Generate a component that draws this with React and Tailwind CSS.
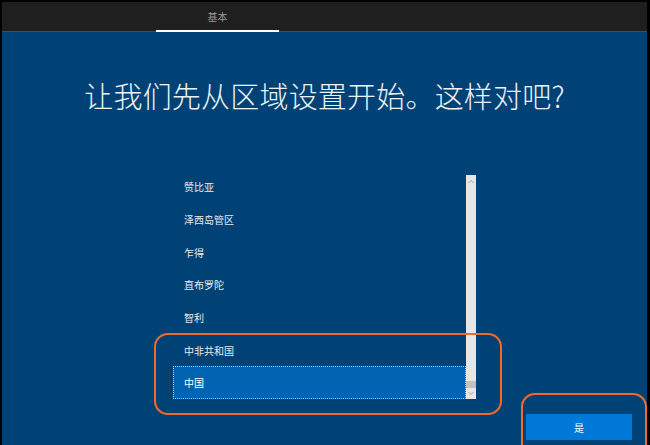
import React from 'react'

const regions = ['赞比亚', '泽西岛管区', '乍得', '直布罗陀', '智利', '中非共和国', '中国']

export default function App() {
  const font = { fontFamily: '"Noto Sans CJK SC", "Noto Sans", sans-serif' }
  return (
    <div className="relative w-[650px] h-[445px] overflow-hidden bg-black pl-[2px] pt-[2px] pr-[3px]" style={font}>
      <div className="flex flex-col h-full">
        {/* top tab bar */}
        <div className="relative h-[29px] bg-[#1f1f1f] flex shrink-0">
          <div className="ml-[154px] w-[123px] flex items-center justify-center text-[10px] text-[#9a9a9a]">基本</div>
        </div>
        <div className="relative h-[1px] bg-[#4a4a4a] shrink-0">
          <div className="absolute left-[154px] top-[-1px] w-[123px] h-[2px] bg-white" />
        </div>

        {/* main */}
        <div className="flex-1 bg-[#004275] flex flex-col">
          <h1 className="mt-[49px] text-center text-[29px] leading-[29px] font-light text-[#eef2f6] tracking-[0.2px]">
            让我们先从区域设置开始。这样对吧?
          </h1>

          <div className="mt-[65px] ml-[171px] w-[303px] h-[224px] flex">
            <div className="w-[293px] h-full overflow-hidden flex flex-col justify-end">
              {regions.map((r, i) =>
                i === regions.length - 1 ? (
                  <div key={r} className="h-[32.67px] shrink-0 flex items-center pl-[10px] bg-[#0063b1] border border-dotted border-[#b8c8d8] text-[10px] text-white">
                    {r}
                  </div>
                ) : (
                  <div key={r} className="h-[32.67px] shrink-0 flex items-center pl-[11px] text-[10px] text-[#e6ebf0]">
                    {r}
                  </div>
                )
              )}
            </div>
            <div className="w-[10px] h-full bg-[#e6e6e6] flex flex-col items-center">
              <svg width="8" height="8" viewBox="0 0 8 8" className="mt-[3px]">
                <path d="M1.5 5 L4 2.5 L6.5 5" fill="none" stroke="#9a9a9a" strokeWidth="0.9" />
              </svg>
              <div className="flex-1" />
              <div className="w-full h-[7px] bg-[#c2c2c2]" />
              <svg width="8" height="8" viewBox="0 0 8 8" className="mt-[1px] mb-[2px]">
                <path d="M1.5 3 L4 5.5 L6.5 3" fill="none" stroke="#9a9a9a" strokeWidth="0.9" />
              </svg>
            </div>
          </div>

          <button className="mt-[15px] ml-[524px] w-[106px] h-[26px] bg-[#0078d7] text-white text-[10px] flex items-center justify-center">
            是
          </button>
        </div>
      </div>

      {/* orange annotation outlines */}
      <div className="absolute left-[154px] top-[333px] w-[348px] h-[82px] rounded-[14px] border-2 border-[#f26b2a]" />
      <div className="absolute left-[521px] top-[393px] w-[126px] h-[70px] rounded-[14px] border-2 border-[#f26b2a]" />
    </div>
  )
}
